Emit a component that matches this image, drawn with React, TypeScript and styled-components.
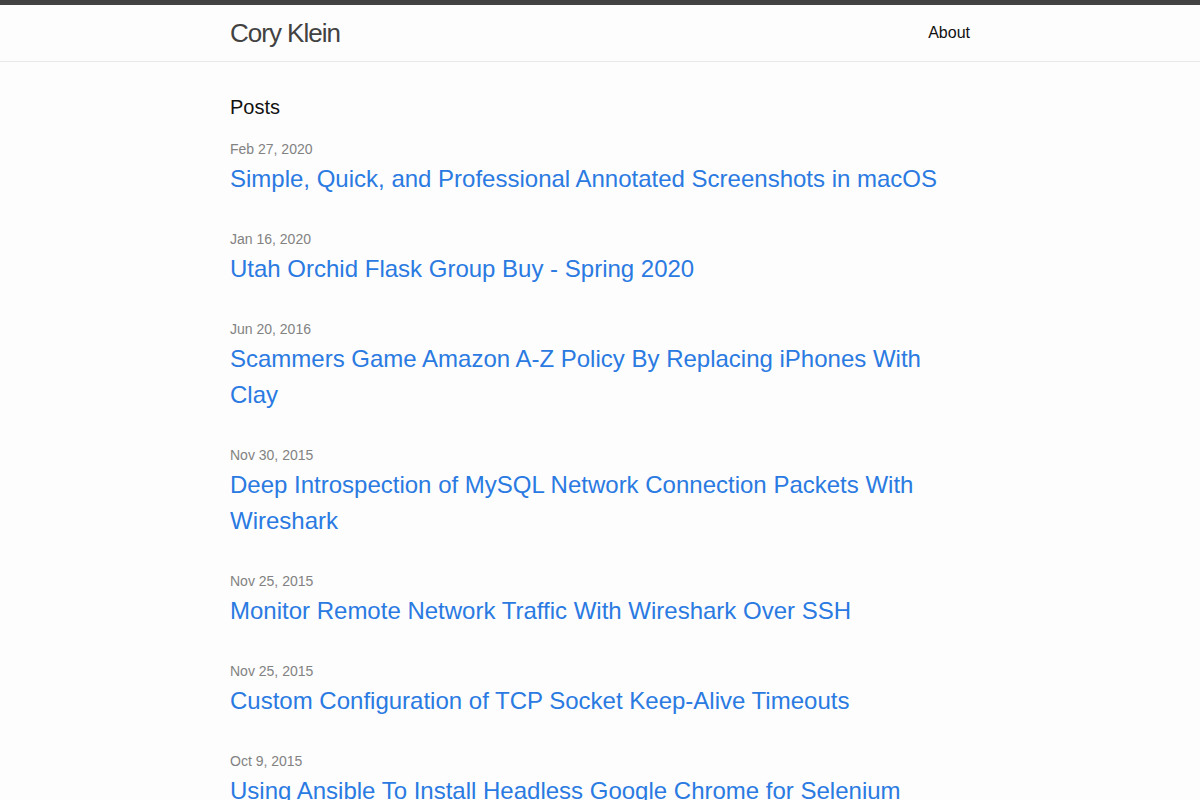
import React from "react";
import styled, { createGlobalStyle } from "styled-components";

const GlobalStyle = createGlobalStyle`
    html, body {
        margin: 0;
        padding: 0;
    }
    body {
        background: #fdfdfd;
        color: #111;
        font: 400 16px/1.5 "Liberation Sans", Arial, Helvetica, sans-serif;
    }
`;

const posts = [
    { date: "Feb 27, 2020", title: "Simple, Quick, and Professional Annotated Screenshots in macOS" },
    { date: "Jan 16, 2020", title: "Utah Orchid Flask Group Buy - Spring 2020" },
    { date: "Jun 20, 2016", title: "Scammers Game Amazon A-Z Policy By Replacing iPhones With Clay" },
    { date: "Nov 30, 2015", title: "Deep Introspection of MySQL Network Connection Packets With Wireshark" },
    { date: "Nov 25, 2015", title: "Monitor Remote Network Traffic With Wireshark Over SSH" },
    { date: "Nov 25, 2015", title: "Custom Configuration of TCP Socket Keep-Alive Timeouts" },
    { date: "Oct 9, 2015", title: "Using Ansible To Install Headless Google Chrome for Selenium" },
    { date: "Sep 2, 2015", title: "Run a Command Every Time a File Changes" },
];

const Header = styled.header`
    border-top: 5px solid #424242;
    border-bottom: 1px solid #e8e8e8;
    min-height: 55.95px;
`;

const Wrapper = styled.div`
    max-width: 740px;
    margin: 0 auto;
    padding: 0 30px;
`;

const HeaderBar = styled(Wrapper)`
    display: flex;
    justify-content: space-between;
    align-items: center;
    padding-top: 1px;
`;

const SiteTitle = styled.a`
    font-size: 26px;
    font-weight: 300;
    line-height: 54px;
    letter-spacing: -1px;
    color: #424242;
    text-decoration: none;
`;

const NavLink = styled.a`
    color: #111;
    line-height: 54px;
    text-decoration: none;
`;

const Main = styled.main`
    padding: 30px 0;
`;

const Heading = styled.h2`
    font-size: 20px;
    font-weight: 400;
    margin: 0 0 15px;
`;

const PostList = styled.ul`
    list-style: none;
    margin: 0;
    padding: 0;
`;

const PostItem = styled.li`
    margin-bottom: 30px;
`;

const Meta = styled.span`
    font-size: 14px;
    color: #828282;
`;

const PostTitle = styled.h3`
    margin: 0;
    font-size: 24px;
    font-weight: 400;
`;

const PostLink = styled.a`
    display: block;
    color: #2a7ae2;
    text-decoration: none;
`;

export default function App() {
    return (
        <>
            <GlobalStyle />
            <Header>
                <HeaderBar>
                    <SiteTitle href="#">Cory Klein</SiteTitle>
                    <NavLink href="#">About</NavLink>
                </HeaderBar>
            </Header>
            <Main>
                <Wrapper>
                    <Heading>Posts</Heading>
                    <PostList>
                        {posts.map((post, i) => (
                            <PostItem key={i}>
                                <Meta>{post.date}</Meta>
                                <PostTitle>
                                    <PostLink href="#">{post.title}</PostLink>
                                </PostTitle>
                            </PostItem>
                        ))}
                    </PostList>
                </Wrapper>
            </Main>
        </>
    );
}
